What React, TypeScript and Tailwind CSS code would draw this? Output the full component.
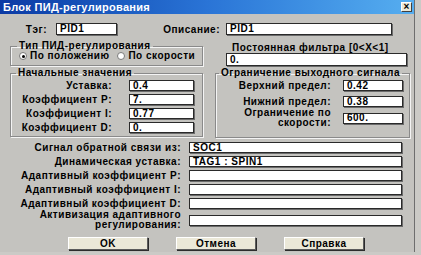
function Field({ value = "", className = "" }: { value?: string; className?: string }) {
  return (
    <div
      className={`bg-white border border-[#2a2a2a] shadow-[1px_1px_0_#6b6b6b] pl-[3px] flex items-center leading-none ${className}`}
    >
      {value}
    </div>
  );
}

function Radio({ checked, label }: { checked?: boolean; label: string }) {
  return (
    <div className="flex items-center gap-[3px] shrink-0 whitespace-nowrap">
      <span className="w-[8px] h-[8px] shrink-0 rounded-full bg-white border border-[#7a7a7a] flex items-center justify-center">
        {checked && <span className="w-[3px] h-[3px] rounded-full bg-black" />}
      </span>
      <span>{label}</span>
    </div>
  );
}

function Btn({ label }: { label: string }) {
  return (
    <div className="w-[80px] h-[13px] bg-[#ebe8d8] border-t border-l border-white border-r border-b border-r-[#5c5c5c] border-b-[#5c5c5c] shadow-[1px_1px_0_#2c2c2c] flex items-center justify-center leading-none">
      {label}
    </div>
  );
}

const groupBox =
  "border border-[#8a8a8a] shadow-[inset_1px_1px_0_#f4f4f4,1px_1px_0_#f4f4f4] rounded-none min-w-0";

export default function App() {
  const initial = [
    ["Уставка:", "0.4"],
    ["Коэффициент P:", "7."],
    ["Коэффициент I:", "0.77"],
    ["Коэффициент D:", "0."],
  ];
  const bottom = [
    ["Сигнал обратной связи из:", "SOC1"],
    ["Динамическая уставка:", "TAG1 : SPIN1"],
    ["Адаптивный коэффициент P:", ""],
    ["Адаптивный коэффициент I:", ""],
    ["Адаптивный коэффициент D:", ""],
  ];

  return (
    <div className="w-[421px] h-[255px] bg-[#cbcac6] overflow-hidden">
      <div className="w-[415px] h-[252px] bg-[#c4c3bf] border-r border-[#6e6e6e] flex flex-col font-['Liberation_Sans',Arial,sans-serif] text-[10px] tracking-[0.5px] font-bold text-black">
        {/* title bar */}
        <div className="h-[14px] shrink-0 flex items-center justify-between bg-gradient-to-r from-[#0c3aa4] via-[#2a74d6] to-[#56aef0] pl-[3px] pr-[2px]">
          <span className="text-white text-[11px] tracking-[0.3px] leading-none">Блок ПИД-регулирования</span>
          <div className="w-[11px] h-[10px] bg-[#ece9d8] border border-t-white border-l-white border-r-[#404040] border-b-[#404040] flex items-center justify-center text-[10px] tracking-normal leading-none">
            ×
          </div>
        </div>

        {/* tag / description */}
        <div className="mt-[9px] h-[12px] flex items-center">
          <span className="w-[47px] text-right">Тэг:</span>
          <Field value="PID1" className="ml-[9px] w-[61px] h-[12px]" />
          <span className="w-[103px] text-right">Описание:</span>
          <Field value="PID1" className="ml-[6px] w-[166px] h-[12px]" />
        </div>

        {/* two columns */}
        <div className="mt-[7px] flex pl-[10px] gap-[12px]">
          <div className="w-[193px] flex flex-col">
            <fieldset className={`${groupBox} h-[24px] px-[8px]`}>
              <legend className="ml-[-2px] px-[2px] leading-[8px]">Тип ПИД-регулирования</legend>
              <div className="flex items-center gap-[8px] mt-[1px] leading-none">
                <Radio checked label="По положению" />
                <Radio label="По скорости" />
              </div>
            </fieldset>
            <fieldset className={`${groupBox} mt-[3px] h-[68px]`}>
              <legend className="ml-[5px] px-[2px] leading-[8px]">Начальные значения</legend>
              <div className="flex flex-col gap-[3px] mt-[3px]">
                {initial.map(([l, v]) => (
                  <div key={l} className="flex items-center h-[11px]">
                    <span className="w-[101px] text-right">{l}</span>
                    <Field value={v} className="ml-[17px] w-[65px] h-[11px]" />
                  </div>
                ))}
              </div>
            </fieldset>
          </div>

          <div className="w-[195px] flex flex-col">
            <div className="h-[11px] pl-[17px] flex items-end leading-none">Постоянная фильтра [0&lt;X&lt;1]</div>
            <Field value="0." className="ml-[11px] w-[181px] h-[13px]" />
            <fieldset className={`${groupBox} mt-[3px] h-[69px]`}>
              <legend className="ml-[3px] px-[2px] leading-[8px]">Ограничение выходного сигнала</legend>
              <div className="flex flex-col mt-[3px]">
                <div className="flex items-center h-[11px]">
                  <span className="w-[115px] text-right">Верхний предел:</span>
                  <Field value="0.42" className="ml-[12px] w-[60px] h-[11px]" />
                </div>
                <div className="flex items-center h-[11px] mt-[5px]">
                  <span className="w-[115px] text-right">Нижний предел:</span>
                  <Field value="0.38" className="ml-[12px] w-[60px] h-[11px]" />
                </div>
                <div className="flex items-center h-[20px] mt-[1px]">
                  <span className="w-[115px] text-right leading-[10px]">
                    Ограничение по
                    <br />
                    скорости:
                  </span>
                  <Field value="600." className="ml-[12px] w-[60px] h-[11px]" />
                </div>
              </div>
            </fieldset>
          </div>
        </div>

        {/* lower rows */}
        <div className="mt-[4px] flex flex-col gap-[3px]">
          {bottom.map(([l, v]) => (
            <div key={l} className="flex items-center h-[11px]">
              <span className="w-[181px] text-right">{l}</span>
              <Field value={v} className="ml-[8px] w-[213px] h-[11px]" />
            </div>
          ))}
          <div className="flex items-center h-[20px] -mt-[2px]">
            <span className="w-[181px] text-right leading-[10px]">
              Активизация адаптивного
              <br />
              регулирования:
            </span>
            <Field className="ml-[8px] w-[213px] h-[11px]" />
          </div>
        </div>

        {/* buttons */}
        <div className="mt-[7px] flex pl-[68px] gap-[28px]">
          <Btn label="OK" />
          <Btn label="Отмена" />
          <Btn label="Справка" />
        </div>
      </div>
    </div>
  );
}
